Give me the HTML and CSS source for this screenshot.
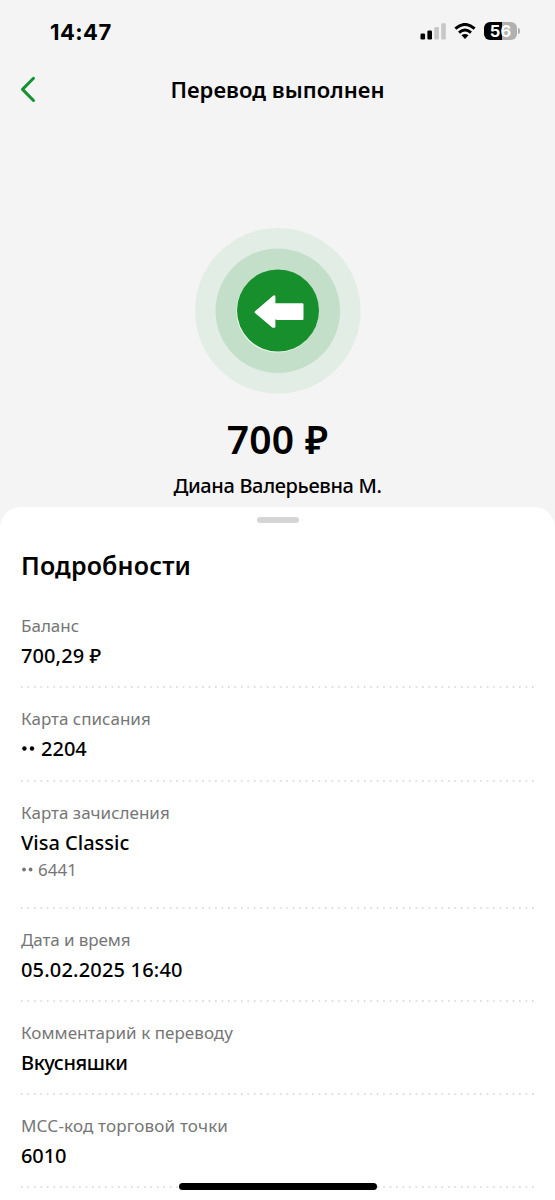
FILE: index.html
```html
<!DOCTYPE html>
<html lang="ru">
<head>
<meta charset="utf-8">
<title>Перевод выполнен</title>
<link rel="stylesheet" href="styles.css">
</head>
<body>
<div class="screen">
  <header class="status">
    <span class="clock">14:47</span>
    <div class="indicators">
      <svg class="signal" width="27" height="18" viewBox="0 0 27 18">
        <rect x="0.5" y="11.5" width="4.6" height="6" rx="1.3"/>
        <rect x="7.4" y="8.5" width="4.6" height="9" rx="1.3"/>
        <rect class="off" x="14.3" y="5" width="4.6" height="12.5" rx="1.3"/>
        <rect class="off" x="21.2" y="1.2" width="4.6" height="16.300" rx="1.3"/>
      </svg>
      <svg class="wifi" width="22" height="17" viewBox="0 0 22 17">
        <path d="M1.4 5.7Q11-2.8 20.6 5.7" fill="none" stroke="#000" stroke-width="3"/>
        <path d="M5 9.6Q11 4.4 17 9.6" fill="none" stroke="#000" stroke-width="2.9"/>
        <path d="M7.5 12.3Q11 9.5 14.5 12.3L11 16Z"/>
      </svg>
      <div class="battery"><span class="level">56</span></div>
      <i class="tip"></i>
    </div>
  </header>
  <nav class="bar">
    <svg class="back" width="18" height="28" viewBox="0 0 18 28"><path d="M15.500 2.300 4.500 13.400l11 11.100" fill="none" stroke="#149130" stroke-width="3" stroke-linecap="round" stroke-linejoin="round"/></svg>
    <h1 class="title">Перевод выполнен</h1>
  </nav>
  <section class="hero">
    <svg class="badge" width="166" height="166" viewBox="0 0 166 166">
      <circle cx="82.8" cy="82.8" r="82.8" fill="#e2ede5"/>
      <circle cx="82.8" cy="82.8" r="62.3" fill="#c3dfc9"/>
      <circle cx="82.4" cy="83.5" r="41.100" fill="#eaf5ec"/>
      <circle cx="83" cy="82.5" r="41" fill="#178f2d"/>
      <path d="M60.800 84.200 79.200 68.500V76.500H107.300V90.700H82L80.400 89.500V87.500H79.200V98.500H78Z" fill="#fff" stroke="#fff" stroke-width="2.400" stroke-linejoin="round"/>
    </svg>
    <div class="amount">700 ₽</div>
    <div class="person">Диана Валерьевна М.</div>
  </section>
  <main class="sheet">
    <div class="grabber"></div>
    <h2 class="heading">Подробности</h2>
    <div class="item"><div class="label l1">Баланс</div><div class="value v1">700,29 ₽</div></div>
    <div class="item"><div class="label l2">Карта списания</div><div class="value v2"><svg class="dots" width="14" height="6" viewBox="0 0 14 6"><circle cx="3.4" cy="2.500" r="2.2"/><circle cx="11" cy="2.500" r="2.2"/></svg>2204</div></div>
    <div class="item long"><div class="label l3">Карта зачисления</div><div class="value v3">Visa Classic</div><div class="sub"><svg class="dots small" width="12" height="6" viewBox="0 0 12 6"><circle cx="3" cy="2.500" r="1.900"/><circle cx="9.6" cy="2.500" r="1.900"/></svg>6441</div></div>
    <div class="item"><div class="label l4">Дата и время</div><div class="value v4">05.02.2025 16:40</div></div>
    <div class="item"><div class="label l5">Комментарий к переводу</div><div class="value v5">Вкусняшки</div></div>
    <div class="item"><div class="label l6">МСС-код торговой точки</div><div class="value v6">6010</div></div>
  </main>
  <div class="home"></div>
</div>
</body>
</html>
```
FILE: styles.css
```css
* { box-sizing: border-box; }
body { margin: 0; font-family: "Noto Sans", sans-serif; color: #000; }
.screen { position: relative; width: 555px; height: 1200px; overflow: hidden; background: #f4f4f4; white-space: nowrap; }
.status { height: 62px; padding: 0 35px 0 50px; display: flex; justify-content: space-between; align-items: center; }
.clock { font: 700 22px/26px Inter, sans-serif; letter-spacing: .45px; padding-top: 1px; }
.indicators { display: flex; align-items: center; }
.signal { margin-right: 7px; }
.signal .off { fill: #c7c7c7; }
.wifi { margin-right: 8px; }
.battery { width: 33px; height: 18px; border-radius: 6px; background: linear-gradient(90deg, #000 56%, #b1b1b1 56%); display: flex; justify-content: center; align-items: center; }
.level { font: 700 16.5px/18px Inter, sans-serif; color: #fff; }
.tip { width: 2px; height: 6px; margin-left: 1px; border-radius: 0 3px 3px 0; background: #b1b1b1; }
.bar { height: 56px; padding: 0 18px; display: grid; grid-template-columns: 18px 1fr 18px; align-items: center; }
.title { margin: -2px 0 0; text-align: center; font-size: 22px; line-height: 30px; font-weight: 600; letter-spacing: .05px; }
.hero { height: 389px; padding-top: 110px; display: flex; flex-direction: column; align-items: center; }
.badge { flex: none; }
.amount { margin-top: 18px; font-size: 39px; line-height: 54px; font-weight: 600; letter-spacing: .3px; }
.person { margin-top: 6px; font-size: 20px; line-height: 28px; font-weight: 500; letter-spacing: -.35px; }
.sheet { height: 693px; padding: 10px 21px 0; border-radius: 21px 21px 0 0; background: #fff; }
.grabber { width: 42px; height: 6px; margin: 0 auto; border-radius: 3px; background: #d5d5d5; }
.heading { margin: 24px 0 12px; font-size: 25px; line-height: 36px; font-weight: 600; letter-spacing: .15px; }
.item { height: 93.3px; padding-top: 19px; background: radial-gradient(circle at .8px 1px, #dcdcdc .6px, transparent 1.1px) left bottom / 6.48px 2px repeat-x; }
.long { height: 127px; }
.label { font-size: 17px; line-height: 24px; color: #767676; }
.l4 { letter-spacing: -.1px; }
.l5 { letter-spacing: .05px; }
.l6 { letter-spacing: .18px; }
.value { margin-top: 4px; font-size: 20px; line-height: 28px; font-weight: 500; display: flex; align-items: center; }
.v1 { letter-spacing: .1px; }
.v4 { letter-spacing: .18px; }
.v5 { letter-spacing: -.45px; }
.v6 { letter-spacing: -.1px; }
.dots { margin-right: 6px; flex: none; }
.sub { font-size: 17px; line-height: 24px; margin-top: 1px; color: #767676; display: flex; align-items: center; }
.small { fill: #767676; margin-right: 5px; }
.home { position: absolute; left: 179px; top: 1183px; width: 198px; height: 7px; border-radius: 4px; background: #000; }
```
